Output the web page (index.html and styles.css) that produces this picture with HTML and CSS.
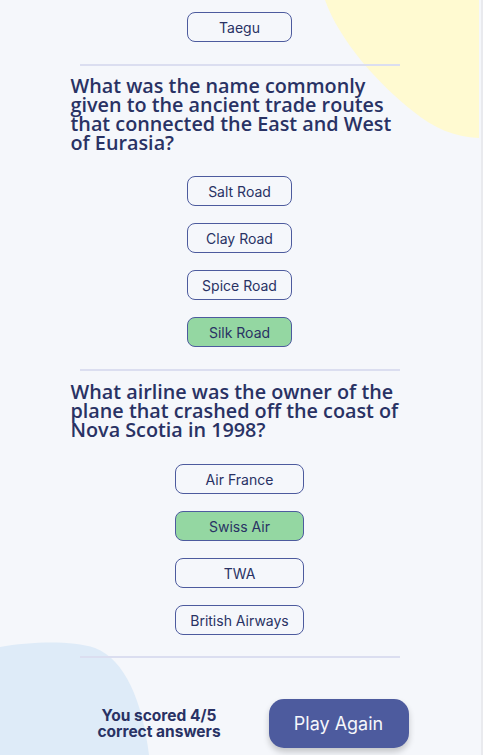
FILE: index.html
```html
<!DOCTYPE html>
<html lang="en">
<head>
<meta charset="utf-8">
<title>Quizzical</title>
<link rel="stylesheet" href="styles.css">
</head>
<body>
<div class="page">
  <svg class="blob blob-yellow" width="160" height="140" viewBox="0 0 160 140" aria-hidden="true">
    <path d="M6,0 C20,40 60,85 95,112 C115,128 135,137 160,138 L160,0 Z" fill="#FFFAD1"/>
  </svg>
  <svg class="blob blob-blue" width="150" height="115" viewBox="0 0 150 115" aria-hidden="true">
    <path d="M0,7 C30,2 70,0 95,8 C125,20 142,60 149,115 L0,115 Z" fill="#DEEBF8"/>
  </svg>
  <main class="quiz">
    <section class="question">
      <div class="options">
        <div class="options-list options-narrow">
          <button class="option">Taegu</button>
        </div>
      </div>
    </section>
    <hr class="divider">
    <section class="question">
      <h2 class="question-title">What was the name commonly given to the ancient trade routes that connected the East and West of Eurasia?</h2>
      <div class="options">
        <div class="options-list">
          <button class="option">Salt Road</button>
          <button class="option">Clay Road</button>
          <button class="option">Spice Road</button>
          <button class="option option-correct">Silk Road</button>
        </div>
      </div>
    </section>
    <hr class="divider">
    <section class="question question-short">
      <h2 class="question-title">What airline was the owner of the plane that crashed off the coast of Nova Scotia in 1998?</h2>
      <div class="options">
        <div class="options-list">
          <button class="option">Air France</button>
          <button class="option option-correct">Swiss Air</button>
          <button class="option">TWA</button>
          <button class="option">British Airways</button>
        </div>
      </div>
    </section>
    <hr class="divider divider-last">
    <footer class="result">
      <p class="score">You scored 4/5<br>correct answers</p>
      <button class="play-again">Play Again</button>
    </footer>
  </main>
</div>
</body>
</html>
```

FILE: styles.css
```css
* { box-sizing: border-box; }

html, body {
  margin: 0;
  padding: 0;
  background: #F5F7FB;
}

.page {
  position: relative;
  width: 483px;
  min-height: 755px;
  overflow: hidden;
  background: #F5F7FB;
  border-right: 2px solid #E9EAEE;
}

.blob {
  position: absolute;
  display: block;
}

.blob-yellow {
  top: 0;
  right: 2px;
}

.blob-blue {
  bottom: 0;
  left: 0;
}

.quiz {
  position: relative;
  width: 338px;
  margin: 0 auto;
  padding: 12px 0 7px;
  transform: translateX(-1px);
}

.question {
  display: flex;
  flex-direction: column;
}

.question-title {
  margin: 10px 0 24px;
  font-family: "Open Sans", "Noto Sans", sans-serif;
  font-weight: 600;
  font-size: 19.8px;
  line-height: 19px;
  color: #293264;
}

.question-short .question-title {
  margin-top: 11px;
  margin-bottom: 25px;
}

.options {
  display: flex;
  justify-content: center;
}

.options-list {
  display: grid;
  grid-template-columns: max-content;
  row-gap: 17px;
}

.options-narrow {
  grid-template-columns: 105px;
}

.option {
  height: 30px;
  padding: 0 14px;
  border: 1px solid #4D5B9E;
  border-radius: 8px;
  background: transparent;
  font-family: Inter, "Liberation Sans", sans-serif;
  font-size: 14px;
  color: #293264;
  cursor: pointer;
}

.option-correct {
  background: #94D7A2;
}

.divider {
  height: 2px;
  margin: 22px 9px 0;
  border: 0;
  background: #DBDEF0;
}

.divider-last {
  margin-top: 21px;
}

.result {
  display: flex;
  align-items: center;
  margin-top: 41px;
}

.score {
  width: 177px;
  margin: 0;
  text-align: center;
  font-family: Inter, "Liberation Sans", sans-serif;
  font-weight: 700;
  font-size: 15.5px;
  line-height: 15.5px;
  color: #293264;
}

.play-again {
  margin-left: auto;
  width: 140px;
  height: 49px;
  border: 0;
  border-radius: 15px;
  background: #4D5B9E;
  color: #F5F7FB;
  font-family: Inter, "Liberation Sans", sans-serif;
  font-size: 18px;
  box-shadow: 0 4px 6px rgba(0, 0, 0, 0.2);
  cursor: pointer;
}
```
